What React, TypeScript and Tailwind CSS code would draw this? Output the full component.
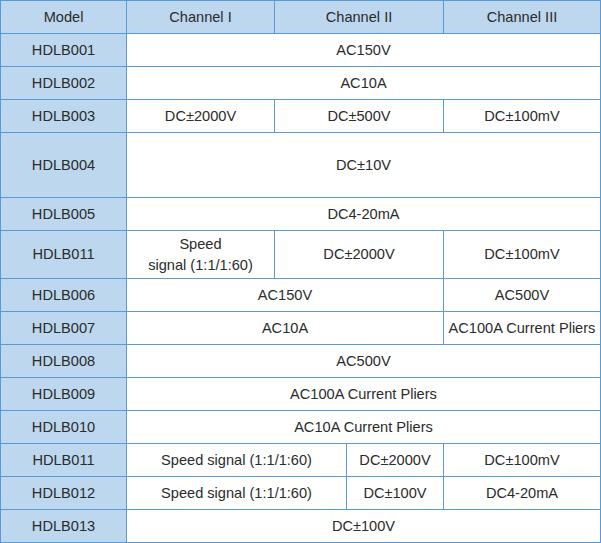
import React from "react";

type Cell = { t: React.ReactNode; span?: number };
type Row = { model: string; h: string; cells: Cell[] };

const rows: Row[] = [
  { model: "HDLB001", h: "h-[33px]", cells: [{ t: "AC150V", span: 4 }] },
  { model: "HDLB002", h: "h-[33px]", cells: [{ t: "AC10A", span: 4 }] },
  {
    model: "HDLB003",
    h: "h-[33px]",
    cells: [{ t: "DC±2000V" }, { t: "DC±500V", span: 2 }, { t: "DC±100mV" }],
  },
  { model: "HDLB004", h: "h-[65px]", cells: [{ t: "DC±10V", span: 4 }] },
  { model: "HDLB005", h: "h-[33px]", cells: [{ t: "DC4-20mA", span: 4 }] },
  {
    model: "HDLB011",
    h: "h-[48px]",
    cells: [
      {
        t: (
          <>
            Speed
            <br />
            signal (1:1/1:60)
          </>
        ),
      },
      { t: "DC±2000V", span: 2 },
      { t: "DC±100mV" },
    ],
  },
  { model: "HDLB006", h: "h-[33px]", cells: [{ t: "AC150V", span: 3 }, { t: "AC500V" }] },
  {
    model: "HDLB007",
    h: "h-[33px]",
    cells: [{ t: "AC10A", span: 3 }, { t: "AC100A Current Pliers" }],
  },
  { model: "HDLB008", h: "h-[33px]", cells: [{ t: "AC500V", span: 4 }] },
  { model: "HDLB009", h: "h-[33px]", cells: [{ t: "AC100A Current Pliers", span: 4 }] },
  { model: "HDLB010", h: "h-[33px]", cells: [{ t: "AC10A Current Pliers", span: 4 }] },
  {
    model: "HDLB011",
    h: "h-[33px]",
    cells: [
      { t: "Speed signal (1:1/1:60)", span: 2 },
      { t: "DC±2000V" },
      { t: "DC±100mV" },
    ],
  },
  {
    model: "HDLB012",
    h: "h-[33px]",
    cells: [
      { t: "Speed signal (1:1/1:60)", span: 2 },
      { t: "DC±100V" },
      { t: "DC4-20mA" },
    ],
  },
  { model: "HDLB013", h: "h-[33px]", cells: [{ t: "DC±100V", span: 4 }] },
];

export default function App() {
  const bd = "border border-[#5b9bd5]";
  return (
    <div className="bg-white">
      <table
        className="w-[601px] table-fixed border-collapse text-[14.6px] leading-[21px] text-[#2b2b2b] text-center"
        style={{ fontFamily: '"Liberation Sans", Arial, sans-serif' }}
      >
        <colgroup>
          <col className="w-[126px]" />
          <col className="w-[148px]" />
          <col className="w-[72px]" />
          <col className="w-[97px]" />
          <col className="w-[157px]" />
        </colgroup>
        <tbody>
          <tr className="h-[33px] bg-[#bdd7ee]">
            <td className={`${bd} p-0`}>Model</td>
            <td className={`${bd} p-0`}>Channel I</td>
            <td className={`${bd} p-0`} colSpan={2}>
              Channel II
            </td>
            <td className={`${bd} p-0`}>Channel III</td>
          </tr>
          {rows.map((r, i) => (
            <tr key={i} className={r.h}>
              <td className={`${bd} p-0 bg-[#bdd7ee]`}>{r.model}</td>
              {r.cells.map((c, j) => (
                <td key={j} className={`${bd} p-0 bg-white`} colSpan={c.span ?? 1}>
                  {c.t}
                </td>
              ))}
            </tr>
          ))}
        </tbody>
      </table>
    </div>
  );
}
